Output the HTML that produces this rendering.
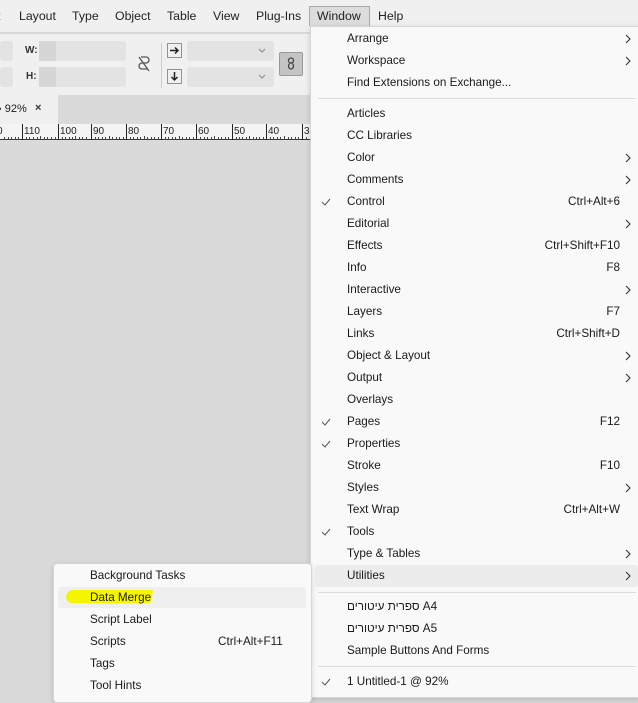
<!DOCTYPE html>
<html><head><meta charset="utf-8">
<style>
*{margin:0;padding:0;box-sizing:border-box}
body{width:638px;height:695px;overflow:hidden;position:relative;background:#dadada;font-family:"Liberation Sans","Noto Sans CJK JP",sans-serif;font-size:12px;color:#1a1a1a}
.a{position:absolute;white-space:nowrap}
.mb{left:0;top:0;width:638px;height:33px;background:#f0f0f0;border-bottom:1px solid #d8d8d8}
.mi{top:9px;font-size:12.3px;color:#222}
.tb{left:0;top:34px;width:310px;height:61px;background:#f0f0f0}
.fld{background:#e3e3e3;border-radius:3px}
.menu{background:#f9f9f9;border:1px solid #d6d6d6;box-shadow:0 2px 6px rgba(0,0,0,.15)}
.it{font-size:11.7px;color:#1a1a1a}
.sep{height:1px;background:#dcdcdc}
.arr{width:6px;height:10px}
.ck{width:10px;height:8px}
</style></head><body>
<svg width="0" height="0" style="position:absolute"><defs>
<symbol id="ar" viewBox="0 0 6 10"><path d="M1 1l4 4-4 4" fill="none" stroke="#333" stroke-width="1.1"/></symbol>
<symbol id="cm" viewBox="0 0 10 8"><path d="M1 4l3 3 5-6" fill="none" stroke="#555" stroke-width="1"/></symbol>
</defs></svg>
<div class="a mb"></div>
<div class="a mi" style="left:-3px">t</div>
<div class="a mi" style="left:19px">Layout</div>
<div class="a mi" style="left:72px">Type</div>
<div class="a mi" style="left:115px">Object</div>
<div class="a mi" style="left:167px">Table</div>
<div class="a mi" style="left:213px">View</div>
<div class="a mi" style="left:256px">Plug-Ins</div>
<div class="a" style="left:309px;top:6px;width:61px;height:20px;background:#dcdcdc;border:1px solid #aaa;border-bottom:none"></div>
<div class="a mi" style="left:317px">Window</div>
<div class="a mi" style="left:378px">Help</div>

<div class="a tb"></div>
<div class="a fld" style="left:0;top:41px;width:13px;height:20px"></div>
<div class="a fld" style="left:0;top:67px;width:13px;height:20px"></div>
<div class="a" style="left:25px;top:45px;font-size:10px;font-weight:bold;color:#333">W:</div>
<div class="a" style="left:26px;top:71px;font-size:10px;font-weight:bold;color:#333">H:</div>
<div class="a fld" style="left:39px;top:41px;width:87px;height:20px"></div>
<div class="a fld" style="left:39px;top:67px;width:87px;height:20px"></div>
<div class="a" style="left:39px;top:41px;width:17px;height:20px;background:#d6d6d6"></div>
<div class="a" style="left:39px;top:67px;width:17px;height:20px;background:#d6d6d6"></div>
<svg class="a" style="left:137px;top:55px" width="14" height="18"><path d="M4 2h5a2 2 0 0 1 0 6H5a2 2 0 0 0 0 6h5M2 2l10 14" fill="none" stroke="#555" stroke-width="1.3"/></svg>
<div class="a" style="left:161px;top:43px;width:1px;height:45px;background:#ccc"></div>
<svg class="a" style="left:167px;top:43px" width="16" height="16"><rect x="0.5" y="0.5" width="14" height="14" fill="none" stroke="#333" stroke-dasharray="1 1"/><path d="M3 7.5h8M8 4.5l3 3-3 3" fill="none" stroke="#222" stroke-width="1.5"/></svg>
<svg class="a" style="left:167px;top:69px" width="16" height="16"><rect x="0.5" y="0.5" width="14" height="14" fill="none" stroke="#333" stroke-dasharray="1 1"/><path d="M7.5 3v8M4.5 8l3 3 3-3" fill="none" stroke="#222" stroke-width="1.5"/></svg>
<div class="a fld" style="left:187px;top:41px;width:87px;height:20px"></div>
<div class="a fld" style="left:187px;top:67px;width:87px;height:20px"></div>
<svg class="a" style="left:258px;top:48px" width="8" height="6"><path d="M1 1l3 3 3-3" fill="none" stroke="#888"/></svg>
<svg class="a" style="left:258px;top:74px" width="8" height="6"><path d="M1 1l3 3 3-3" fill="none" stroke="#888"/></svg>
<div class="a" style="left:279px;top:52px;width:24px;height:24px;background:#c4c4c4;border:1px solid #999;border-radius:2px"></div>
<svg class="a" style="left:286px;top:57px" width="10" height="14"><path d="M5 1a2.5 2.5 0 0 0 0 5a2.5 3 0 0 1 0 6a2.5 3 0 0 1 0-6a2.5 2.5 0 0 0 0-5" fill="none" stroke="#444" stroke-width="1.3"/></svg>

<div class="a" style="left:0;top:95px;width:310px;height:29px;background:#dadada"></div>
<div class="a" style="left:0;top:95px;width:58px;height:29px;background:#f0f0f0"></div>
<div class="a" style="left:-2px;top:103px;font-size:11px">› 92%</div>
<div class="a" style="left:35px;top:102px;font-size:11px;font-weight:bold;color:#333">×</div>
<div class="a" style="left:0;top:124px;width:310px;height:16px;background:#f4f4f4;border-bottom:1px solid #333"></div>
<svg class="a" style="left:0;top:124px" width="310" height="16">
<g stroke="#222" stroke-width="1">
<line x1="22.5" y1="0" x2="22.5" y2="16"/><line x1="58.5" y1="0" x2="58.5" y2="16"/><line x1="91.5" y1="0" x2="91.5" y2="16"/><line x1="126.5" y1="0" x2="126.5" y2="16"/><line x1="161.5" y1="0" x2="161.5" y2="16"/><line x1="196.5" y1="0" x2="196.5" y2="16"/><line x1="232.5" y1="0" x2="232.5" y2="16"/><line x1="266.5" y1="0" x2="266.5" y2="16"/><line x1="302.5" y1="0" x2="302.5" y2="16"/>
</g>
<g font-size="10" fill="#222" font-family="Liberation Sans">
<text x="-3" y="10">0</text><text x="24" y="10">110</text><text x="60" y="10">100</text><text x="93" y="10">90</text><text x="128" y="10">80</text><text x="163" y="10">70</text><text x="198" y="10">60</text><text x="234" y="10">50</text><text x="268" y="10">40</text><text x="304" y="10">3</text>
</g>
<path stroke="#444" d="M4.5 13v3M8.5 13v3M11.5 13v3M15.5 13v3M18.5 13v3M26.5 13v3M29.5 13v3M33.5 13v3M37.5 13v3M40.5 12v4M44.5 13v3M47.5 13v3M51.5 13v3M55.5 13v3M62.5 13v3M65.5 13v3M69.5 13v3M72.5 13v3M75.5 12v4M79.5 13v3M82.5 13v3M86.5 13v3M95.5 13v3M98.5 13v3M102.5 13v3M105.5 13v3M109.5 12v4M112.5 13v3M116.5 13v3M119.5 13v3M123.5 13v3M130.5 13v3M133.5 13v3M137.5 13v3M140.5 13v3M144.5 12v4M147.5 13v3M151.5 13v3M154.5 13v3M158.5 13v3M165.5 13v3M168.5 13v3M172.5 13v3M175.5 13v3M179.5 12v4M182.5 13v3M186.5 13v3M189.5 13v3M193.5 13v3M200.5 13v3M204.5 13v3M207.5 13v3M211.5 13v3M214.5 12v4M218.5 13v3M221.5 13v3M225.5 13v3M228.5 13v3M236.5 13v3M239.5 13v3M242.5 13v3M246.5 13v3M249.5 12v4M253.5 13v3M256.5 13v3M259.5 13v3M263.5 13v3M270.5 13v3M273.5 13v3M277.5 13v3M280.5 13v3M284.5 12v4M288.5 13v3M291.5 13v3M295.5 13v3M298.5 13v3M306.5 13v3"/>
</svg>

<!-- Window menu -->
<div class="a menu" style="left:310px;top:26px;width:330px;height:672px"></div>
<div class="a" style="left:315px;top:565px;width:323px;height:22px;background:#ececec;border-radius:3px"></div>
<div class="a sep" style="left:318px;top:98px;width:318px"></div>
<div class="a sep" style="left:318px;top:592px;width:318px"></div>
<div class="a sep" style="left:318px;top:666px;width:318px"></div>

<div class="a it" style="left:347px;top:32px">Arrange</div><svg class="a arr" style="left:625px;top:34px"><use href="#ar"/></svg>
<div class="a it" style="left:347px;top:54px">Workspace</div><svg class="a arr" style="left:625px;top:56px"><use href="#ar"/></svg>
<div class="a it" style="left:347px;top:76px">Find Extensions on Exchange...</div>
<div class="a it" style="left:347px;top:107px">Articles</div>
<div class="a it" style="left:347px;top:129px">CC Libraries</div>
<div class="a it" style="left:347px;top:151px">Color</div><svg class="a arr" style="left:625px;top:153px"><use href="#ar"/></svg>
<div class="a it" style="left:347px;top:173px">Comments</div><svg class="a arr" style="left:625px;top:175px"><use href="#ar"/></svg>
<svg class="a ck" style="left:321px;top:198px"><use href="#cm"/></svg><div class="a it" style="left:347px;top:195px">Control</div><div class="a it" style="right:18px;top:195px">Ctrl+Alt+6</div>
<div class="a it" style="left:347px;top:217px">Editorial</div><svg class="a arr" style="left:625px;top:219px"><use href="#ar"/></svg>
<div class="a it" style="left:347px;top:239px">Effects</div><div class="a it" style="right:18px;top:239px">Ctrl+Shift+F10</div>
<div class="a it" style="left:347px;top:261px">Info</div><div class="a it" style="right:18px;top:261px">F8</div>
<div class="a it" style="left:347px;top:283px">Interactive</div><svg class="a arr" style="left:625px;top:285px"><use href="#ar"/></svg>
<div class="a it" style="left:347px;top:305px">Layers</div><div class="a it" style="right:18px;top:305px">F7</div>
<div class="a it" style="left:347px;top:327px">Links</div><div class="a it" style="right:18px;top:327px">Ctrl+Shift+D</div>
<div class="a it" style="left:347px;top:349px">Object &amp; Layout</div><svg class="a arr" style="left:625px;top:351px"><use href="#ar"/></svg>
<div class="a it" style="left:347px;top:371px">Output</div><svg class="a arr" style="left:625px;top:373px"><use href="#ar"/></svg>
<div class="a it" style="left:347px;top:393px">Overlays</div>
<svg class="a ck" style="left:321px;top:418px"><use href="#cm"/></svg><div class="a it" style="left:347px;top:415px">Pages</div><div class="a it" style="right:18px;top:415px">F12</div>
<svg class="a ck" style="left:321px;top:440px"><use href="#cm"/></svg><div class="a it" style="left:347px;top:437px">Properties</div>
<div class="a it" style="left:347px;top:459px">Stroke</div><div class="a it" style="right:18px;top:459px">F10</div>
<div class="a it" style="left:347px;top:481px">Styles</div><svg class="a arr" style="left:625px;top:483px"><use href="#ar"/></svg>
<div class="a it" style="left:347px;top:503px">Text Wrap</div><div class="a it" style="right:18px;top:503px">Ctrl+Alt+W</div>
<svg class="a ck" style="left:321px;top:528px"><use href="#cm"/></svg><div class="a it" style="left:347px;top:525px">Tools</div>
<div class="a it" style="left:347px;top:547px">Type &amp; Tables</div><svg class="a arr" style="left:625px;top:549px"><use href="#ar"/></svg>
<div class="a it" style="left:347px;top:569px">Utilities</div><svg class="a arr" style="left:625px;top:571px"><use href="#ar"/></svg>
<div class="a it" style="left:347px;top:600px">ספרית עיטורים A4</div>
<div class="a it" style="left:347px;top:622px">ספרית עיטורים A5</div>
<div class="a it" style="left:347px;top:644px">Sample Buttons And Forms</div>
<svg class="a ck" style="left:321px;top:678px"><use href="#cm"/></svg><div class="a it" style="left:347px;top:675px">1 Untitled-1 @ 92%</div>

<!-- Submenu -->
<div class="a menu" style="left:53px;top:563px;width:259px;height:140px;border-radius:4px"></div>
<div class="a" style="left:58px;top:587px;width:248px;height:21px;background:#efefef;border-radius:3px"></div>
<div class="a" style="left:66px;top:590px;width:86px;height:13px;background:#f5f500;border-radius:6px 2px 2px 8px;transform:skewX(-10deg)"></div>
<div class="a it" style="left:90px;top:569px">Background Tasks</div>
<div class="a it" style="left:90px;top:591px">Data Merge</div>
<div class="a it" style="left:90px;top:613px">Script Label</div>
<div class="a it" style="left:90px;top:635px">Scripts</div><div class="a it" style="left:218px;top:635px">Ctrl+Alt+F11</div>
<div class="a it" style="left:90px;top:657px">Tags</div>
<div class="a it" style="left:90px;top:679px">Tool Hints</div>
</body></html>
